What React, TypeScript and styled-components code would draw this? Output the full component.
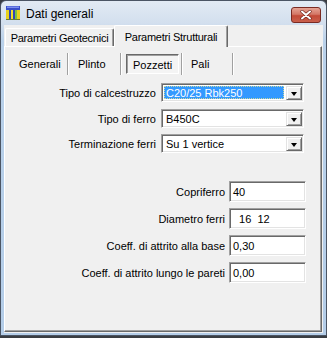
import React from "react";
import styled, { createGlobalStyle } from "styled-components";

const Global = createGlobalStyle`
  html, body { margin: 0; padding: 0; background: #3a3d42; }
  body {
    width: 327px; height: 338px; overflow: hidden;
    font-family: "Liberation Sans", Arial, sans-serif;
    font-size: 11px; color: #000;
  }
`;

const Window = styled.div`
  box-sizing: border-box;
  width: 327px;
  height: 336px;
  display: flex;
  flex-direction: column;
  border: 1px solid #4b5564;
  border-radius: 6px 6px 0 0;
  background: linear-gradient(#e2eaf4, #d3dfee 22px, #b9d1ea 40px, #b4cde8);
  padding: 0 3px 2px 3px;
`;

const TitleBar = styled.div`
  height: 24px;
  display: flex;
  align-items: center;
  gap: 5px;
  padding: 0 2px 0 1px;
`;

const TitleText = styled.div`
  flex: 1;
  font-family: "Liberation Sans", Arial, sans-serif;
  font-size: 12px;
  color: #000;
  padding-top: 2px;
`;

const CloseButton = styled.div`
  box-sizing: border-box;
  width: 30px;
  height: 16px;
  margin-top: 3px;
  border: 1px solid #7a2a22;
  border-radius: 3px;
  background: linear-gradient(#e5a394, #d47766 45%, #c34a37 55%, #c9604c);
  display: flex;
  align-items: center;
  justify-content: center;
`;

const Client = styled.div`
  flex: 1;
  display: flex;
  flex-direction: column;
  background: #f0f0f0;
`;

const TabStrip = styled.div`
  height: 21px;
  display: flex;
  align-items: flex-end;
  padding-left: 1px;
  position: relative;
  z-index: 1;
`;

const Tab = styled.div<{ $active?: boolean; $w: number }>`
  box-sizing: border-box;
  width: ${(p) => p.$w}px;
  height: ${(p) => (p.$active ? 22 : 18)}px;
  margin-bottom: ${(p) => (p.$active ? -1 : 0)}px;
  background: #f0f0f0;
  border-top: 1px solid #fff;
  border-left: 1px solid #fff;
  border-right: 1px solid #696969;
  box-shadow: inset -1px 0 #a0a0a0;
  border-radius: 2px 2px 0 0;
  display: flex;
  align-items: ${(p) => (p.$active ? "flex-start" : "center")};
  padding-top: ${(p) => (p.$active ? 5 : 0)}px;
  justify-content: center;
  white-space: nowrap;
  letter-spacing: -0.25px;
`;

const Pane = styled.div`
  flex: 1;
  box-sizing: border-box;
  border-top: 1px solid #fff;
  border-left: 1px solid #fff;
  border-right: 1px solid #696969;
  border-bottom: 1px solid #696969;
  box-shadow: inset -1px -1px #a0a0a0;
  display: flex;
  flex-direction: column;
  margin-bottom: 1px;
  margin-right: 1px;
`;

const ButtonRow = styled.div`
  display: flex;
  align-items: center;
  height: 22px;
  margin-top: 6px;
  padding-left: 7px;
`;

const ButtonTab = styled.div<{ $w: number; $pad: number }>`
  box-sizing: border-box;
  width: ${(p) => p.$w}px;
  height: 22px;
  padding-left: ${(p) => p.$pad}px;
  display: flex;
  align-items: center;
  white-space: nowrap;
`;

const PressedBox = styled.div`
  box-sizing: border-box;
  height: 20px;
  padding: 0 6px;
  display: flex;
  align-items: center;
  padding-top: 2px;
  border-top: 1px solid #696969;
  border-left: 1px solid #696969;
  border-right: 1px solid #fff;
  border-bottom: 1px solid #fff;
  box-shadow: inset 1px 1px #a0a0a0;
  background: #f4f4f4;
`;

const Separator = styled.div`
  width: 1px;
  height: 22px;
  background: #a0a0a0;
  border-right: 1px solid #fff;
`;

const Row = styled.div<{ $mt: number; $label: number }>`
  display: grid;
  grid-template-columns: ${(p) => p.$label}px auto;
  column-gap: ${(p) => (p.$label > 200 ? 4 : 5)}px;
  align-items: center;
  margin-top: ${(p) => p.$mt}px;
`;

const Label = styled.div`
  text-align: right;
  white-space: nowrap;
`;

const Combo = styled.div`
  box-sizing: border-box;
  width: 143px;
  height: 19px;
  background: #fff;
  border-top: 1px solid #a0a0a0;
  border-left: 1px solid #a0a0a0;
  border-right: 1px solid #fff;
  border-bottom: 1px solid #fff;
  box-shadow: inset 1px 1px #696969, inset -1px -1px #e3e3e3;
  padding: 1px;
  display: flex;
  align-items: stretch;
`;

const ComboText = styled.div<{ $selected?: boolean }>`
  flex: 1;
  margin: 1px 2px 1px 1px;
  padding-left: 2px;
  display: flex;
  align-items: center;
  white-space: nowrap;
  background: ${(p) => (p.$selected ? "#3399ff" : "transparent")};
  color: ${(p) => (p.$selected ? "#fff" : "#000")};
  outline: ${(p) => (p.$selected ? "1px dotted #c8d8a0" : "none")};
  outline-offset: -1px;
`;

const DropButton = styled.div`
  box-sizing: border-box;
  width: 16px;
  margin: 1px 0 0 0;
  background: #f0f0f0;
  border-top: 1px solid #e3e3e3;
  border-left: 1px solid #e3e3e3;
  border-right: 1px solid #696969;
  border-bottom: 1px solid #696969;
  box-shadow: inset 1px 1px #fff, inset -1px -1px #a0a0a0;
  display: flex;
  align-items: center;
  justify-content: center;
`;

const Arrow = styled.div`
  width: 0;
  height: 0;
  border-left: 3.5px solid transparent;
  border-right: 3.5px solid transparent;
  border-top: 4px solid #000;
  margin-top: 1px;
`;

const Edit = styled.div`
  box-sizing: border-box;
  width: 77px;
  height: 21px;
  background: #fff;
  border-top: 1px solid #a0a0a0;
  border-left: 1px solid #a0a0a0;
  border-right: 1px solid #fff;
  border-bottom: 1px solid #fff;
  box-shadow: inset 1px 1px #696969, inset -1px -1px #e3e3e3;
  padding-left: 3px;
  display: flex;
  align-items: center;
  white-space: pre;
`;

const AppIcon = () => (
  <svg width="16" height="16" viewBox="0 0 16 16">
    <rect x="1" y="1" width="14" height="4" fill="#3a4fc8" />
    <rect x="2" y="1.5" width="12" height="1.5" fill="#7d8ff0" />
    <rect x="1" y="5" width="3" height="10" fill="#e8d21e" />
    <rect x="4" y="5" width="2" height="10" fill="#2f47b8" />
    <rect x="6" y="5" width="2" height="10" fill="#f0dd2a" />
    <rect x="8" y="5" width="2" height="10" fill="#2f47b8" />
    <rect x="10" y="5" width="2" height="10" fill="#7bc142" />
    <rect x="12" y="5" width="3" height="10" fill="#e8d21e" />
    <rect x="1" y="14" width="14" height="1" fill="#6a7a30" />
  </svg>
);

const CloseX = () => (
  <svg width="12" height="10" viewBox="0 0 12 10">
    <path d="M2 1.5 L10 8.5 M10 1.5 L2 8.5" stroke="#6b2018" strokeWidth="3.2" strokeLinecap="round" />
    <path d="M2 1.5 L10 8.5 M10 1.5 L2 8.5" stroke="#fff" strokeWidth="2" strokeLinecap="round" />
  </svg>
);

const ComboBox = ({ value, selected }: { value: string; selected?: boolean }) => (
  <Combo>
    <ComboText $selected={selected}>{value}</ComboText>
    <DropButton>
      <Arrow />
    </DropButton>
  </Combo>
);

export default function App() {
  return (
    <>
      <Global />
      <Window>
        <TitleBar>
          <AppIcon />
          <TitleText>Dati generali</TitleText>
          <CloseButton>
            <CloseX />
          </CloseButton>
        </TitleBar>
        <Client>
          <TabStrip>
            <Tab $w={109}>Parametri Geotecnici</Tab>
            <Tab $w={114} $active>
              Parametri Strutturali
            </Tab>
          </TabStrip>
          <Pane>
            <ButtonRow>
              <ButtonTab $w={55} $pad={7}>Generali</ButtonTab>
              <Separator />
              <ButtonTab $w={51} $pad={9}>Plinto</ButtonTab>
              <Separator />
              <ButtonTab $w={59} $pad={4}>
                <PressedBox>Pozzetti</PressedBox>
              </ButtonTab>
              <Separator />
              <ButtonTab $w={49} $pad={8}>Pali</ButtonTab>
              <Separator />
            </ButtonRow>

            <Row $mt={8} $label={151}>
              <Label>Tipo di calcestruzzo</Label>
              <ComboBox value="C20/25 Rbk250" selected />
            </Row>
            <Row $mt={7} $label={151}>
              <Label>Tipo di ferro</Label>
              <ComboBox value="B450C" />
            </Row>
            <Row $mt={6} $label={151}>
              <Label>Terminazione ferri</Label>
              <ComboBox value="Su 1 vertice" />
            </Row>

            <Row $mt={28} $label={220}>
              <Label>Copriferro</Label>
              <Edit>40</Edit>
            </Row>
            <Row $mt={6} $label={220}>
              <Label>Diametro ferri</Label>
              <Edit>{"  16  12"}</Edit>
            </Row>
            <Row $mt={6} $label={220}>
              <Label>Coeff. di attrito alla base</Label>
              <Edit>0,30</Edit>
            </Row>
            <Row $mt={6} $label={220}>
              <Label>Coeff. di attrito lungo le pareti</Label>
              <Edit>0,00</Edit>
            </Row>
          </Pane>
        </Client>
      </Window>
    </>
  );
}
